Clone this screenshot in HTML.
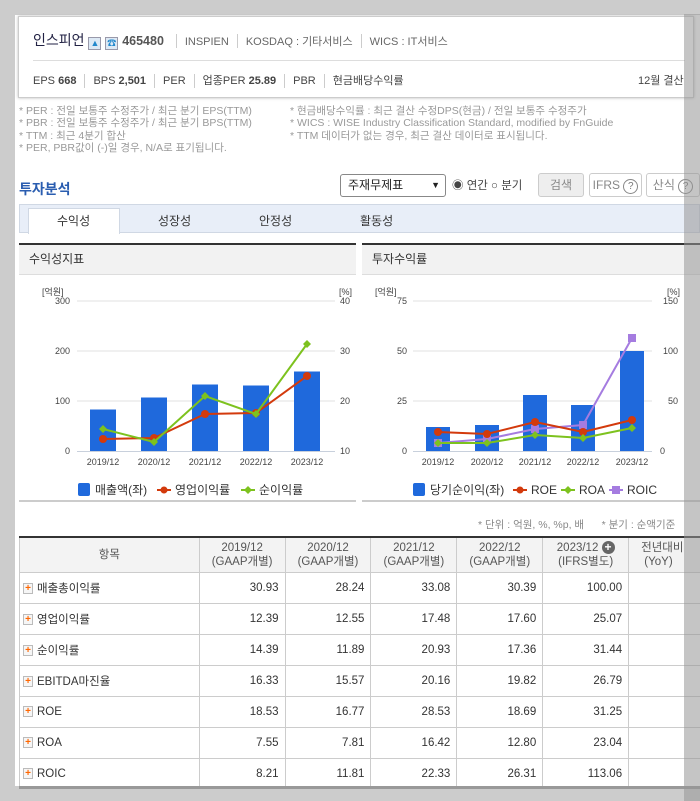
<!DOCTYPE html>
<html><head><meta charset="utf-8">
<style>
*{margin:0;padding:0;box-sizing:border-box}
body{width:700px;height:801px;background:#ccc;position:relative;overflow:hidden;font-family:"Liberation Sans","Noto Sans CJK KR",sans-serif;color:#333}
.a{position:absolute}
.page{left:15px;top:15px;width:685px;height:771px;background:#fff}
.card{left:18px;top:16px;width:676px;height:82px;border:1px solid #ccc;box-shadow:0 0 3px #bbb;background:#fff}
.t11{font-size:11px;color:#666}
.note{font-size:10.5px;color:#999;line-height:12.3px;white-space:nowrap}
.sep{display:inline-block;width:1px;height:14px;background:#ccc;vertical-align:middle;margin:0 8px}
table{border-collapse:collapse;font-size:11.5px}
td,th{border:1px solid #ccc;height:31px}
th{font-weight:normal;background:#f3f3f3;color:#555;line-height:14px;font-size:11.5px}
td.n{text-align:right;padding-right:6px}
.pl{display:inline-block;width:10px;height:11px;border:1px solid #bbb;background:#f6f6f6;color:#f60;font-size:10px;line-height:9px;text-align:center;font-weight:bold;vertical-align:middle;margin:0 4px 0 3px}
.btn{border:1px solid #ccc;border-radius:3px;height:24px;font-size:12px;color:#888;line-height:22px;text-align:center}
.q{display:inline-block;width:15px;height:15px;border:1px solid #888;border-radius:50%;font-size:10px;line-height:13px;text-align:center;color:#777}
</style></head><body>
<div class="a page"></div>
<div class="a card"></div>
<div class="a" style="left:33px;top:30px;font-size:14px;white-space:nowrap;line-height:20px">
<span style="color:#224">인스피언</span>
<span style="display:inline-block;width:13px;height:13px;border:1px solid #99a;background:#dde9f5;vertical-align:-1px;color:#28c;font-size:9px;line-height:11px;text-align:center">▲</span>
<span style="display:inline-block;width:13px;height:13px;border:1px solid #99a;background:#dde9f5;vertical-align:-1px;color:#28c;font-size:9px;line-height:11px;text-align:center">☎</span>
<b style="font-size:12.5px;color:#555">465480</b>
<span class="sep"></span><span class="t11">INSPIEN</span><span class="sep"></span><span class="t11">KOSDAQ : 기타서비스</span><span class="sep"></span><span class="t11">WICS : IT서비스</span></div>
<div class="a" style="left:33px;top:60px;width:652px;height:1px;background:#ddd"></div>
<div class="a" style="left:33px;top:73px;font-size:11px;color:#444;white-space:nowrap;line-height:16px">EPS <b>668</b><span class="sep"></span>BPS <b>2,501</b><span class="sep"></span>PER<span class="sep"></span>업종PER <b>25.89</b><span class="sep"></span>PBR<span class="sep"></span>현금배당수익률</div>
<div class="a" style="left:638px;top:73px;font-size:11px;color:#444;line-height:16px;white-space:nowrap">12월 결산</div>
<div class="a note" style="left:19px;top:105px">* PER : 전일 보통주 수정주가 / 최근 분기 EPS(TTM)<br>* PBR : 전일 보통주 수정주가 / 최근 분기 BPS(TTM)<br>* TTM : 최근 4분기 합산<br>* PER, PBR값이 (-)일 경우, N/A로 표기됩니다.</div>
<div class="a note" style="left:290px;top:105px">* 현금배당수익률 : 최근 결산 수정DPS(현금) / 전일 보통주 수정주가<br>* WICS : WISE Industry Classification Standard, modified by FnGuide<br>* TTM 데이터가 없는 경우, 최근 결산 데이터로 표시됩니다.</div>
<div class="a" style="left:19px;top:179px;font-size:14px;font-weight:bold;color:#2a5db0">투자분석</div>
<div class="a" style="left:340px;top:174px;width:106px;height:23px;border:1px solid #888;border-radius:3px;font-size:12px;line-height:21px;padding-left:7px;color:#222">주재무제표<span style="position:absolute;right:5px;font-size:9px">▼</span></div>
<div class="a" style="left:452px;top:177px;font-size:11.5px;color:#444;white-space:nowrap">◉ 연간 ○ 분기</div>
<div class="a btn" style="left:538px;top:173px;width:46px;background:#eee">검색</div>
<div class="a btn" style="left:589px;top:173px;width:53px">IFRS <span class="q">?</span></div>
<div class="a btn" style="left:646px;top:173px;width:54px">산식 <span class="q">?</span></div>
<div class="a" style="left:19px;top:204px;width:681px;height:29px;background:#e8eef8;border:1px solid #d0d8e4"></div>
<div class="a" style="left:28px;top:208px;width:92px;height:26px;background:#fff;border:1px solid #d0d8e4;border-bottom:none"></div>
<div class="a" style="top:212px;left:0;font-size:12px;color:#333;white-space:nowrap"><span class="a" style="left:57px">수익성</span><span class="a" style="left:158px">성장성</span><span class="a" style="left:259px">안정성</span><span class="a" style="left:360px">활동성</span></div>
<!-- panels -->
<div class="a" style="left:19px;top:243px;width:337px;height:32px;background:#f2f2f2;border-top:2px solid #333;border-bottom:1px solid #ddd;font-size:12px;line-height:29px;padding-left:10px">수익성지표</div>
<div class="a" style="left:362px;top:243px;width:338px;height:32px;background:#f2f2f2;border-top:2px solid #333;border-bottom:1px solid #ddd;font-size:12px;line-height:29px;padding-left:10px">투자수익률</div>
<div class="a" style="left:19px;top:500px;width:337px;height:2px;background:#ccc"></div>
<div class="a" style="left:362px;top:500px;width:338px;height:2px;background:#ccc"></div>
<svg class="a" style="left:0;top:0" width="700" height="801" font-family="Liberation Sans, Noto Sans CJK KR, sans-serif" font-size="9">
<g stroke="#e2e2e2"><line x1="77" x2="335" y1="301" y2="301"/><line x1="77" x2="335" y1="351" y2="351"/><line x1="77" x2="335" y1="401" y2="401"/>
<line x1="413" x2="652" y1="301" y2="301"/><line x1="413" x2="652" y1="351" y2="351"/><line x1="413" x2="652" y1="401" y2="401"/></g>
<g stroke="#c8d0dc"><line x1="77" x2="335" y1="451.5" y2="451.5"/><line x1="413" x2="652" y1="451.5" y2="451.5"/></g>
<g fill="#444" text-anchor="end"><text x="42" y="295" text-anchor="start">[억원]</text><text x="70" y="304">300</text><text x="70" y="354">200</text><text x="70" y="404">100</text><text x="70" y="454">0</text>
<text x="352" y="295">[%]</text><text x="350" y="304">40</text><text x="350" y="354">30</text><text x="350" y="404">20</text><text x="350" y="454">10</text>
<text x="375" y="295" text-anchor="start">[억원]</text><text x="407" y="304">75</text><text x="407" y="354">50</text><text x="407" y="404">25</text><text x="407" y="454">0</text>
<text x="680" y="295">[%]</text><text x="678" y="304">150</text><text x="678" y="354">100</text><text x="678" y="404">50</text><text x="665" y="454">0</text></g>
<g fill="#444" text-anchor="middle"><text x="103" y="465">2019/12</text><text x="154" y="465">2020/12</text><text x="205" y="465">2021/12</text><text x="256" y="465">2022/12</text><text x="307" y="465">2023/12</text>
<text x="438" y="465">2019/12</text><text x="487" y="465">2020/12</text><text x="535" y="465">2021/12</text><text x="583" y="465">2022/12</text><text x="632" y="465">2023/12</text></g>
<g fill="#1f69dc"><rect x="90" y="409.5" width="26" height="41.5"/><rect x="141" y="397.5" width="26" height="53.5"/><rect x="192" y="384.5" width="26" height="66.5"/><rect x="243" y="385.5" width="26" height="65.5"/><rect x="294" y="371.5" width="26" height="79.5"/>
<rect x="426" y="427" width="24" height="24"/><rect x="475" y="425" width="24" height="26"/><rect x="523" y="395" width="24" height="56"/><rect x="571" y="405" width="24" height="46"/><rect x="620" y="351" width="24" height="100"/></g>
<polyline points="103,439 154,438 205,414 256,413 307,376" fill="none" stroke="#d33a0c" stroke-width="2"/>
<g fill="#d33a0c"><circle cx="103" cy="439" r="4"/><circle cx="154" cy="438" r="4"/><circle cx="205" cy="414" r="4"/><circle cx="256" cy="413" r="4"/><circle cx="307" cy="376" r="4"/></g>
<polyline points="103,429 154,442 205,396 256,414 307,344" fill="none" stroke="#7dc21e" stroke-width="2"/>
<g fill="#7dc21e"><path d="M103 425l4 4-4 4-4-4z M154 438l4 4-4 4-4-4z M205 392l4 4-4 4-4-4z M256 410l4 4-4 4-4-4z M307 340l4 4-4 4-4-4z"/></g>
<polyline points="438,443 487,439 535,429 583,425 632,338" fill="none" stroke="#a57ce0" stroke-width="2"/>
<g fill="#a57ce0"><rect x="434" y="439" width="8" height="8"/><rect x="483" y="435" width="8" height="8"/><rect x="531" y="425" width="8" height="8"/><rect x="579" y="421" width="8" height="8"/><rect x="628" y="334" width="8" height="8"/></g>
<polyline points="438,432 487,434 535,422 583,432 632,420" fill="none" stroke="#d33a0c" stroke-width="2"/>
<g fill="#d33a0c"><circle cx="438" cy="432" r="4"/><circle cx="487" cy="434" r="4"/><circle cx="535" cy="422" r="4"/><circle cx="583" cy="432" r="4"/><circle cx="632" cy="420" r="4"/></g>
<polyline points="438,443 487,443 535,435 583,438 632,428" fill="none" stroke="#7dc21e" stroke-width="2"/>
<g fill="#7dc21e"><path d="M438 439l4 4-4 4-4-4z M487 439l4 4-4 4-4-4z M535 431l4 4-4 4-4-4z M583 434l4 4-4 4-4-4z M632 424l4 4-4 4-4-4z"/></g>
<!-- legends -->
<g font-size="12" fill="#333">
<rect x="78" y="483" width="12" height="13" rx="2" fill="#1f69dc"/><text x="95" y="494">매출액(좌)</text>
<line x1="157" x2="171" y1="490" y2="490" stroke="#d33a0c" stroke-width="2"/><circle cx="164" cy="490" r="3.5" fill="#d33a0c"/><text x="175" y="494">영업이익률</text>
<line x1="241" x2="255" y1="490" y2="490" stroke="#7dc21e" stroke-width="2"/><path d="M248 486l4 4-4 4-4-4z" fill="#7dc21e"/><text x="259" y="494">순이익률</text>
<rect x="413" y="483" width="12" height="13" rx="2" fill="#1f69dc"/><text x="430" y="494">당기순이익(좌)</text>
<line x1="513" x2="527" y1="490" y2="490" stroke="#d33a0c" stroke-width="2"/><circle cx="520" cy="490" r="3.5" fill="#d33a0c"/><text x="531" y="494">ROE</text>
<line x1="561" x2="575" y1="490" y2="490" stroke="#7dc21e" stroke-width="2"/><path d="M568 486l4 4-4 4-4-4z" fill="#7dc21e"/><text x="579" y="494">ROA</text>
<line x1="609" x2="623" y1="490" y2="490" stroke="#a57ce0" stroke-width="2"/><rect x="612" y="486" width="8" height="8" fill="#a57ce0"/><text x="627" y="494">ROIC</text>
</g>
</svg>
<div class="a" style="left:478px;top:517px;font-size:10.5px;color:#888;white-space:nowrap">* 단위 : 억원, %, %p, 배 &nbsp; &nbsp; &nbsp;* 분기 : 순액기준</div>
<table class="a" style="left:19px;top:536px;width:700px;border-top:2px solid #333">
<colgroup><col style="width:180px"><col style="width:86px"><col style="width:86px"><col style="width:86px"><col style="width:86px"><col style="width:86px"><col style="width:90px"></colgroup>
<tr style="height:35px"><th>항목</th><th>2019/12<br>(GAAP개별)</th><th>2020/12<br>(GAAP개별)</th><th>2021/12<br>(GAAP개별)</th><th>2022/12<br>(GAAP개별)</th><th>2023/12 <span style="display:inline-block;width:13px;height:13px;border-radius:50%;background:#666;color:#fff;font-size:12px;line-height:13px;font-weight:bold">+</span><br>(IFRS별도)</th><th style="text-align:left;padding-left:12px">전년대비<br>&nbsp;(YoY)</th></tr>
<tr><td><span class="pl">+</span>매출총이익률</td><td class="n">30.93</td><td class="n">28.24</td><td class="n">33.08</td><td class="n">30.39</td><td class="n">100.00</td><td></td></tr>
<tr><td><span class="pl">+</span>영업이익률</td><td class="n">12.39</td><td class="n">12.55</td><td class="n">17.48</td><td class="n">17.60</td><td class="n">25.07</td><td></td></tr>
<tr><td><span class="pl">+</span>순이익률</td><td class="n">14.39</td><td class="n">11.89</td><td class="n">20.93</td><td class="n">17.36</td><td class="n">31.44</td><td></td></tr>
<tr><td><span class="pl">+</span>EBITDA마진율</td><td class="n">16.33</td><td class="n">15.57</td><td class="n">20.16</td><td class="n">19.82</td><td class="n">26.79</td><td></td></tr>
<tr><td><span class="pl">+</span>ROE</td><td class="n">18.53</td><td class="n">16.77</td><td class="n">28.53</td><td class="n">18.69</td><td class="n">31.25</td><td></td></tr>
<tr><td><span class="pl">+</span>ROA</td><td class="n">7.55</td><td class="n">7.81</td><td class="n">16.42</td><td class="n">12.80</td><td class="n">23.04</td><td></td></tr>
<tr><td><span class="pl">+</span>ROIC</td><td class="n">8.21</td><td class="n">11.81</td><td class="n">22.33</td><td class="n">26.31</td><td class="n">113.06</td><td></td></tr>
</table>
<div class="a" style="left:0;top:787px;width:700px;height:14px;background:#ccc"></div>
<div class="a" style="left:19px;top:786px;width:681px;height:3px;background:#999"></div>
<div class="a" style="left:684px;top:0;width:16px;height:801px;background:rgba(150,150,150,0.55)"></div>
<div class="a" style="left:0;top:0;width:700px;height:14px;background:#ccc"></div>
</body></html>
